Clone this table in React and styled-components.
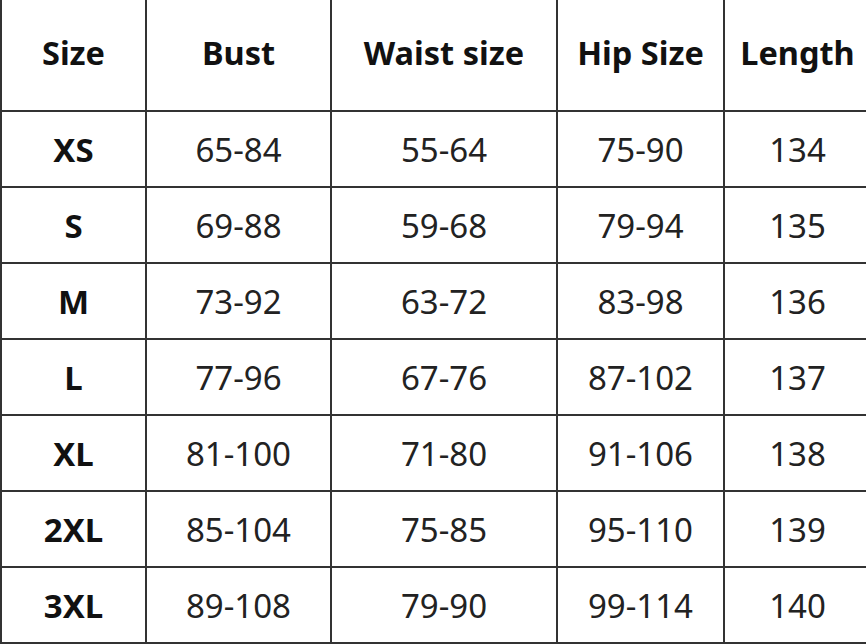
import React from 'react';
import styled, { createGlobalStyle } from 'styled-components';

const GlobalStyle = createGlobalStyle`
  html, body {
    margin: 0;
    padding: 0;
    background: #fff;
    overflow: hidden;
  }
  body {
    font-family: "Noto Sans", "Open Sans", sans-serif;
  }
`

const Page = styled.div`
  width: 866px;
  height: 644px;
  overflow: hidden;
  background: #fff;
`

const Grid = styled.div`
  display: grid;
  grid-template-columns: 143px 183px 224px 165px 145px;
  grid-template-rows: 110px repeat(7, 74px);
  gap: 2px;
  padding: 0 2px 2px 2px;
  background: #333;
  width: max-content;
`

const Cell = styled.div`
  background: #fff;
  display: flex;
  align-items: center;
  justify-content: center;
  font-size: ${p => (p.$head ? '32.5px' : '33px')};
  font-weight: ${p => (p.$bold ? 700 : 400)};
  color: ${p => (p.$bold ? '#111' : '#222')};
  padding-bottom: ${p => (p.$head ? '6px' : '0')};
  box-sizing: border-box;
  white-space: nowrap;
`

const headers = ['Size', 'Bust', 'Waist size', 'Hip Size', 'Length'];

const rows = [
  ['XS', '65-84', '55-64', '75-90', '134'],
  ['S', '69-88', '59-68', '79-94', '135'],
  ['M', '73-92', '63-72', '83-98', '136'],
  ['L', '77-96', '67-76', '87-102', '137'],
  ['XL', '81-100', '71-80', '91-106', '138'],
  ['2XL', '85-104', '75-85', '95-110', '139'],
  ['3XL', '89-108', '79-90', '99-114', '140'],
];

export default function App() {
  return (
    <Page>
      <GlobalStyle />
      <Grid>
        {headers.map(h => (
          <Cell key={h} $head $bold>{h}</Cell>
        ))}
        {rows.map(r =>
          r.map((v, i) => (
            <Cell key={r[0] + i} $bold={i === 0}>{v}</Cell>
          ))
        )}
      </Grid>
    </Page>
  );
}
